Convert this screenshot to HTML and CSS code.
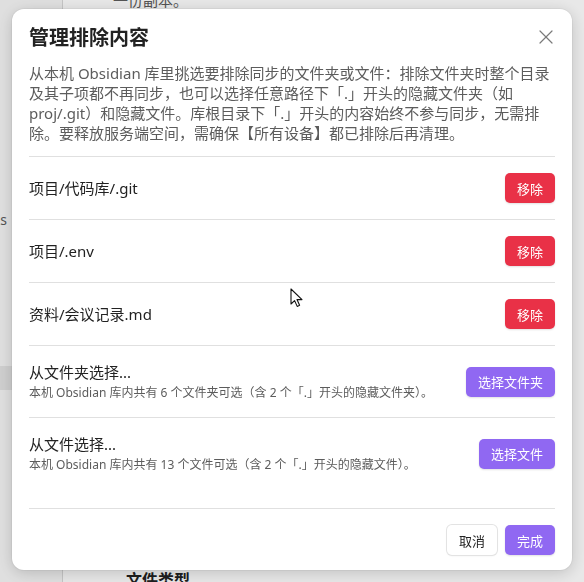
FILE: index.html
```html
<!DOCTYPE html>
<html lang="zh-CN">
<head>
    <meta charset="UTF-8">
    <meta name="viewport" content="width=device-width, initial-scale=1.0">
    <title>管理排除内容</title>
    <link rel="stylesheet" href="styles.css">
</head>
<body>
    <!-- settings window underneath the dialog -->
    <div class="app">
        <aside class="sidebar">
            <div class="nav-item">Files and links</div>
            <div class="nav-item is-active">Sync</div>
        </aside>
        <main class="workspace">
            <div class="pane-text">
                <p class="setting-note">一份副本。</p>
                <h3 class="setting-heading">文件类型</h3>
            </div>
            <div class="pane-controls">
                <div class="dropdown">下载全部</div>
                <div class="control-note">文件</div>
                <div class="control-btn is-red">从服务端清理</div>
                <div class="control-btn">查看</div>
            </div>
        </main>
    </div>

    <div class="modal-container">
        <div class="modal-bg"></div>
        <div class="modal">
            <button type="button" class="modal-close" aria-label="关闭">
                <svg width="24" height="24" viewBox="0 0 24 24" fill="none" stroke="currentColor" stroke-width="1.2" stroke-linecap="round">
                    <path d="M18 6 6 18"/>
                    <path d="m6 6 12 12"/>
                </svg>
            </button>
            <h2 class="modal-title">管理排除内容</h2>
            <p class="modal-desc">从本机 Obsidian 库里挑选要排除同步的文件夹或文件：排除文件夹时整个目录及其子项都不再同步，也可以选择任意路径下「.」开头的隐藏文件夹（如 proj/.git）和隐藏文件。库根目录下「.」开头的内容始终不参与同步，无需排除。要释放服务端空间，需确保【所有设备】都已排除后再清理。</p>

            <div class="setting-list">
                <div class="setting-item">
                    <div class="setting-info"><div class="setting-name">项目/代码库/.git</div></div>
                    <button type="button" class="btn btn-danger">移除</button>
                </div>
                <div class="setting-item">
                    <div class="setting-info"><div class="setting-name">项目/.env</div></div>
                    <button type="button" class="btn btn-danger">移除</button>
                </div>
                <div class="setting-item">
                    <div class="setting-info"><div class="setting-name">资料/会议记录.md</div></div>
                    <button type="button" class="btn btn-danger">移除</button>
                </div>
                <div class="setting-item">
                    <div class="setting-info">
                        <div class="setting-name">从文件夹选择...</div>
                        <div class="setting-desc">本机 Obsidian 库内共有 6 个文件夹可选（含 2 个「.」开头的隐藏文件夹）。</div>
                    </div>
                    <button type="button" class="btn btn-accent">选择文件夹</button>
                </div>
                <div class="setting-item">
                    <div class="setting-info">
                        <div class="setting-name">从文件选择...</div>
                        <div class="setting-desc">本机 Obsidian 库内共有 13 个文件可选（含 2 个「.」开头的隐藏文件）。</div>
                    </div>
                    <button type="button" class="btn btn-accent">选择文件</button>
                </div>
            </div>

            <div class="modal-footer">
                <button type="button" class="btn btn-plain">取消</button>
                <button type="button" class="btn btn-accent">完成</button>
            </div>
        </div>
    </div>

    <!-- mouse pointer -->
    <svg class="pointer" width="14" height="20" viewBox="0 0 14 20">
        <path d="M1 1v15l3.6-3.4 2.6 5.8 2.4-1.1-2.6-5.7H12z" fill="#fff" stroke="#111" stroke-width="1.1" stroke-linejoin="round"/>
    </svg>
</body>
</html>
```

FILE: styles.css
```css
body {
    margin: 0;
    width: 584px;
    height: 582px;
    overflow: hidden;
    font-family: "Noto Sans", "Noto Sans CJK SC", sans-serif;
    color: #222222;
}

/* window behind the dialog */
.app {
    display: flex;
    height: 100vh;
    background-color: #ffffff;
}
.sidebar {
    width: 62px;
    flex: none;
    background-color: #f6f6f6;
    border-right: 1px solid #d9d9d9;
    padding-top: 208px;
}
.nav-item {
    width: 7px;
    height: 24px;
    line-height: 24px;
    font-size: 14px;
    color: #5c5c5c;
    white-space: nowrap;
    overflow: hidden;
    direction: rtl;
}
.nav-item.is-active {
    width: auto;
    margin-top: 134px;
    background-color: #e4e4e4;
    color: transparent;
}
.workspace {
    flex: 1;
    display: flex;
    overflow: hidden;
}
.pane-text {
    width: 509px;
    flex: none;
    padding-left: 50px;
}
.setting-note {
    margin: -10px 0 0;
    font-size: 15px;
    line-height: 20px;
    color: #5c5c5c;
    white-space: nowrap;
}
.setting-heading {
    margin: 559px 0 0 13px;
    font-size: 16px;
    line-height: 22px;
}
.pane-controls {
    display: flex;
    flex-direction: column;
    align-items: flex-start;
    margin-left: -6px;
    white-space: nowrap;
    font-size: 14px;
}
.dropdown {
    margin-top: 80px;
    height: 24px;
    line-height: 24px;
    padding: 0 8px;
    border: 1px solid #d0d0d0;
    border-radius: 5px;
    background-color: #ffffff;
}
.control-note {
    margin-top: 94px;
    padding-left: 4px;
    color: #8a8a8a;
}
.control-btn {
    height: 28px;
    line-height: 28px;
    padding: 0 8px;
    border-radius: 5px;
    background-color: #ffffff;
    box-shadow: 0 0 0 1px #dddddd;
}
.control-btn.is-red {
    margin-top: 166px;
    background-color: #e93147;
    color: #ffffff;
    box-shadow: none;
}
.control-btn:last-child {
    margin-top: 82px;
}

/* dialog */
.modal-container {
    position: fixed;
    inset: 0;
    display: flex;
    justify-content: center;
    align-items: flex-start;
    padding-top: 9px;
}
.modal-bg {
    position: absolute;
    inset: 0;
    background-color: rgba(0, 0, 0, 0.09);
}
.modal {
    position: relative;
    width: 560px;
    box-sizing: border-box;
    padding: 16px 17px 15px;
    background-color: #ffffff;
    border-radius: 12px;
    box-shadow: 0 3px 16px rgba(0, 0, 0, 0.18), 0 0 0 1px rgba(0, 0, 0, 0.04);
}
.modal-close {
    position: absolute;
    top: 16px;
    right: 14px;
    width: 24px;
    height: 24px;
    padding: 0;
    border: none;
    background: none;
    color: #7a7a7a;
    display: flex;
}
.modal-title {
    margin: 0;
    font-size: 20px;
    line-height: 26px;
    font-weight: 700;
}
.modal-desc {
    margin: 12px 0 13px;
    font-size: 15px;
    line-height: 20px;
    color: #5c5c5c;
}

.setting-item {
    display: flex;
    align-items: center;
    justify-content: space-between;
    gap: 16px;
    padding: 16px 0;
    border-top: 1px solid #e0e0e0;
}
.setting-name {
    font-size: 15px;
    line-height: 20px;
    color: #222222;
}
.setting-desc {
    margin-top: 2px;
    font-size: 12px;
    line-height: 17px;
    color: #5c5c5c;
}

.btn {
    height: 30px;
    padding: 0 12px;
    border: none;
    border-radius: 5px;
    font-family: inherit;
    font-size: 13px;
    cursor: pointer;
    flex: none;
}
.btn-danger {
    background-color: #e93147;
    color: #ffffff;
    box-shadow: 0 1px 2px rgba(0, 0, 0, 0.12);
}
.btn-accent {
    background-color: #9068f2;
    color: #ffffff;
    box-shadow: 0 1px 2px rgba(0, 0, 0, 0.12);
}
.btn-plain {
    background-color: #ffffff;
    color: #222222;
    box-shadow: 0 0 0 1px #e3e3e3, 0 1px 2px rgba(0, 0, 0, 0.08);
}

.modal-footer {
    display: flex;
    justify-content: flex-end;
    gap: 8px;
    margin-top: 19px;
    padding-top: 16px;
    border-top: 1px solid #e0e0e0;
}

.pointer {
    position: absolute;
    left: 290px;
    top: 288px;
}
```
